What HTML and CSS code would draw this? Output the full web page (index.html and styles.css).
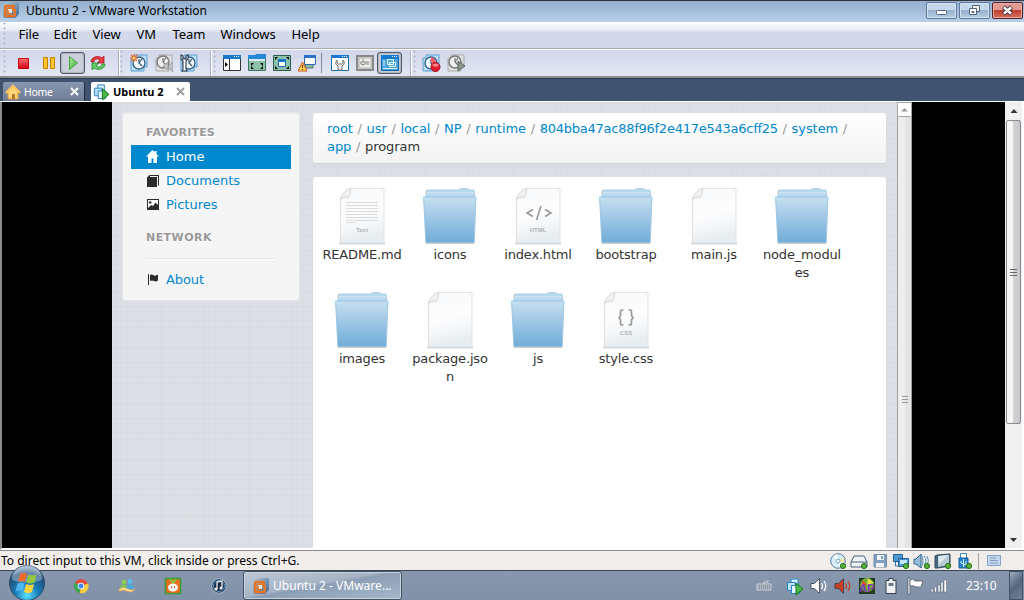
FILE: index.html
```html
<!DOCTYPE html>
<html lang="en">
<head>
<meta charset="utf-8">
<title>Ubuntu 2 - VMware Workstation</title>
<link rel="stylesheet" href="styles.css">
</head>
<body>
<svg class="defs" width="0" height="0">
  <defs>
    <linearGradient id="gFolder" x1="0" y1="0" x2="0" y2="1"><stop offset="0" stop-color="#c6dff0"/><stop offset="1" stop-color="#6facd8"/></linearGradient>
    <linearGradient id="gPaper" x1="0" y1="0" x2="0.2" y2="1"><stop offset="0" stop-color="#f6f8f9"/><stop offset=".5" stop-color="#fdfdfe"/><stop offset=".75" stop-color="#f4f7f9"/><stop offset="1" stop-color="#e6ecf0"/></linearGradient>
    <linearGradient id="gRed" x1="0" y1="0" x2="0" y2="1"><stop offset="0" stop-color="#ff7070"/><stop offset="1" stop-color="#d80010"/></linearGradient>
    <linearGradient id="gGreen" x1="0" y1="0" x2="1" y2="1"><stop offset="0" stop-color="#b8f0a0"/><stop offset="1" stop-color="#2fa82f"/></linearGradient>
    <linearGradient id="gSteel" x1="0" y1="0" x2="1" y2="1"><stop offset="0" stop-color="#b4cbdc"/><stop offset="1" stop-color="#3e6690"/></linearGradient>
    <radialGradient id="gOrb" cx=".5" cy=".85" r=".8"><stop offset="0" stop-color="#5fe0ff"/><stop offset=".4" stop-color="#1880ba"/><stop offset=".8" stop-color="#204f7c"/><stop offset="1" stop-color="#86a6c2"/></radialGradient>
  </defs>
  <symbol id="folder" viewBox="0 0 64 64">
    <path d="M8 14V7.500q0-1.500 1.500-1.500H41l1-1.500h8l1 1.500h4q1.500 0 1.500 1.500V14z" fill="#b9d9ee" stroke="#9cc6e2" stroke-width=".8"/>
    <path d="M8.500 9h48" stroke="#d5e8f5"/>
    <path d="M5.500 13h52.500l-1.800 45.500H7.800z" fill="url(#gFolder)" stroke="#93c0df" stroke-width=".8"/>
    <path d="M8 59.300h48" stroke="#8b9297" stroke-width="1" opacity=".6"/>
  </symbol>
  <symbol id="file" viewBox="0 0 64 64">
    <path d="M9 59.500h46" stroke="#c4c4c4" stroke-width="1.500"/>
    <path d="M10.500 14L20 4.500h34V59H10.500z" fill="url(#gPaper)" stroke="#e2e4e6"/>
    <path d="M10.500 15.500c1-4 5-10 9.800-11 1 3-.3 7-2 9-2-.7-6 0-7.800 2z" fill="#f1f1f1" stroke="#cfd0d0" stroke-width=".9"/>
  </symbol>
  <symbol id="shots" viewBox="0 0 18 18">
    <path d="M1 4h3V1h13v12h-3v4H1z" fill="#b8def7" stroke="#5aa0d4"/><circle cx="9" cy="9" r="6" fill="#f4fbff" stroke="#39658c" stroke-width="1.400"/><path d="M9 5v4l3 3M9 9l3-4" fill="none" stroke="#385777" stroke-width="1.200"/>
  </symbol>
  <symbol id="shotsgrey" viewBox="0 0 18 18">
    <path d="M1 4h3V1h13v12h-3v4H1z" fill="#dedfe0" stroke="#aaa"/><circle cx="8" cy="8" r="6" fill="#eee" stroke="#777" stroke-width="1.400"/><path d="M8 4v4l3 3M8 8l3-4" fill="none" stroke="#777" stroke-width="1.200"/>
  </symbol>
  <symbol id="vmlogo" viewBox="0 0 18 18">
    <path d="M1 5q0-1 1-1.500L4 1.500Q4.500 1 6 1h9.500Q17 1 17 2.500V12q0 1-1 2l-2 2q-.5 1-2 1H3q-2 0-2-2z" fill="url(#gSteel)"/>
    <path d="M6.500 9.500V8h5V5H4.200Q3.200 5 3.200 6v8q0 1 1 1h7.500q1 0 1-1V8" fill="none" stroke="#e87424" stroke-width="2.600"/><path d="M6 8h4v4H6z" fill="#dce9f3"/><path d="M6 9v3.500h3" fill="none" stroke="#e87424" stroke-width="1.500"/>
  </symbol>
  <symbol id="vmrun" viewBox="0 0 18 18">
    <path d="M5 2h7v8H5z" fill="#d8efff" stroke="#2784c9"/><path d="M1.500 5.500h8v8h-8z" fill="#bce0fa" stroke="#2784c9"/><path d="M5.500 8.500h8v8h-8z" fill="#e5f4ff" stroke="#2784c9"/><path d="M10 6v12l7-6z" fill="#49b647" stroke="#17751c"/>
  </symbol>
  <symbol id="speaker" viewBox="0 0 18 18">
    <path d="M1 6.500h3.500L9.500 1.500v15L4.500 11.500H1z" fill="currentColor" stroke="#333b45" stroke-width=".8"/><path d="M11.500 6q2 3 0 6M14 4q3.500 5 0 10" fill="none" stroke="currentColor" stroke-width="1.300"/>
  </symbol>
</svg>

<div class="window">
  <header class="titlebar">
    <svg class="logo" width="18" height="18"><use href="#vmlogo"/></svg>
    <h1 class="title">Ubuntu 2 - VMware Workstation</h1>
    <div class="controls">
      <button class="ctl"><svg width="29" height="15"><rect x="9.500" y="7.500" width="10" height="4" rx="1" fill="#fff" stroke="#53647a"/></svg></button>
      <button class="ctl"><svg width="29" height="15"><path d="M12.500 2.500h7v6h-7z" fill="#eee" stroke="#53647a"/><path d="M9.500 5.500h7v6h-7z" fill="#fff" stroke="#53647a"/><path d="M12 8.500h2v1h-2z" fill="none" stroke="#53647a"/></svg></button>
      <button class="ctl close"><svg width="29" height="15"><path d="M10.500 4l8 7M18.500 4l-8 7" stroke="#4f3946" stroke-width="4.500"/><path d="M11 4.400l7 6.200M18 4.400l-7 6.200" stroke="#fff" stroke-width="2.600"/></svg></button>
    </div>
  </header>

  <nav class="menubar"><i class="grip"></i>
    <span>File</span><span>Edit</span><span>View</span><span>VM</span><span>Team</span><span>Windows</span><span>Help</span>
  </nav>

  <div class="toolbar">
    <div class="tools first"><i class="grip"></i>
      <span class="tool"><svg width="18" height="18"><path d="M4.500 4.500h10v10h-10z" fill="url(#gRed)" stroke="#c80010"/></svg></span>
      <span class="tool"><svg width="18" height="18"><path d="M4.500 3.500h4v11h-4zM11.500 3.500h4v11h-4z" fill="#ffc428" stroke="#c98200"/></svg></span>
      <span class="tool pressed"><svg width="18" height="18"><path d="M5.500 2.500v13l8-6.500z" fill="url(#gGreen)" stroke="#3aa43a"/></svg></span>
      <span class="tool"><svg width="20" height="18"><path d="M3 8C3 3 10 1 14 4l2-2v7H9l3-3C9 4 6 5 6 8z" fill="#ee3b41" stroke="#a8182a" stroke-width=".8"/><path d="M17 10c0 5-7 7-11 4l-2 2V9h7l-3 3c3 2 6 1 6-2z" fill="#60cf64" stroke="#238635" stroke-width=".8"/></svg></span>
    </div>
    <div class="tools second"><i class="grip"></i>
      <span class="tool"><svg width="18" height="18"><use href="#shots"/><path d="M4 0v8M0 4h8M1 1l6 6M7 1L1 7" stroke="#f0602b" stroke-width="1.200"/><circle cx="4" cy="4" r="1.500" fill="#ffe36b"/></svg></span>
      <span class="tool"><svg width="18" height="18"><use href="#shotsgrey"/><path d="M13 8v8l-5-4zM18 8v10l-5-5z" fill="#c6c6c6" stroke="#888" stroke-width=".7"/></svg></span>
      <span class="tool"><svg width="18" height="18"><use href="#shots"/><path d="M1 1v4l2 2v8l-1 2h5l-1-2V7l2-2V1L6 2v3H3V2z" fill="#fff" stroke="#263849" stroke-width="1.100"/></svg></span>
    </div>
    <div class="tools third"><i class="grip"></i>
      <span class="tool"><svg width="18" height="18"><path d="M.5 1.500h17v15H.5z" fill="#fff" stroke="#333"/><path d="M0 1h18v4H0z" fill="#1979c9"/><path d="M11 2.500h1m1 0h1m1 0h1" stroke="#fff"/><path d="M6.500 5v12" stroke="#333"/><path d="M2 8v5l3-2.500z"/></svg></span>
      <span class="tool"><svg width="18" height="18"><path d="M.5 1.500h17v15H.5z" fill="#8bc2a9" stroke="#38745e"/><path d="M0 4V1h7l1-1h10v5H0z" fill="#2688d8"/><path d="M1 5h16v2H1z" fill="#d9edf7"/><path d="M3 9h3l-3 3zM15 9h-3l3 3zM3 15h3l-3-3zM15 15h-3l3-3z"/></svg></span>
      <span class="tool"><svg width="18" height="18"><path d="M.5 1.500h17v15H.5z" fill="#8bc2a9" stroke="#285d4b"/><path d="M5.500 5.500h7v7h-7z" fill="#fff" stroke="#1768c0"/><path d="M5 5h8v3H5z" fill="#1979c9"/><path d="M2 3h3L2 6zM16 3h-3l3 3zM2 15h3l-3-3zM16 15h-3l3-3z"/></svg></span>
      <span class="tool"><svg width="18" height="18"><path d="M8 7h7v7H7z" fill="#8db8a2" stroke="#4c7765"/><path d="M6.500 1.500h11v9h-11z" fill="#fff" stroke="#2d67b6"/><path d="M6 1h12v3H6z" fill="#2b70cb"/><path d="M4.500 8L9 17H0z" fill="#ffe24d" stroke="#d05322"/><path d="M4.500 11v3m0 1v1" stroke="#a42200" stroke-width="1.300"/></svg></span>
      <i class="rule"></i>
      <span class="tool"><svg width="18" height="18"><path d="M.5 1.500h17v15H.5z" fill="#fff" stroke="#1670b6"/><path d="M0 1h18v3H0z" fill="#1979d2"/><path d="M11 2.500h1m1 0h1m1 0h1" stroke="#fff"/><path d="M6 6q-3 4 1 6v4h4v-4q4-2 1-6v3l-1.500 1h-3L6 9z" fill="#eee" stroke="#737373"/></svg></span>
      <span class="tool"><svg width="18" height="18"><path d="M1 2h16v14H1z" fill="#ddd" stroke="#888" stroke-width="2"/><path d="M3 4h12v10H3z" fill="#f2f2ec" stroke="#aaa"/><path d="M5 7v3q2 2 4 0V7M7 5v4m3-1h3m-3 2h3" fill="none" stroke="#777"/></svg></span>
      <span class="tool pressed"><svg width="18" height="18"><path d="M.5 1.500h17v15H.5z" fill="#4ba3dc" stroke="#1264a8"/><path d="M0 1h18v4H0z" fill="#167bd0"/><path d="M11 2.500h1m1 0h1m1 0h1" stroke="#fff"/><path d="M6.500 5.500h6v5h-6zM8.500 8.500h6v4h-6z" fill="#4fa7df" stroke="#e4f6ff"/><path d="M2 7h2M2 9h2M2 11h2M2 14.500h14" stroke="#d3eeff"/></svg></span>
    </div>
    <div class="tools fourth"><i class="grip"></i>
      <span class="tool"><svg width="19" height="18"><use href="#shots" width="18" height="18"/><path d="M9 9V3q5 1 5 6z" fill="#f3606c"/><circle cx="13.500" cy="13" r="4.500" fill="#e21c2b" stroke="#a20d1a"/><ellipse cx="13.500" cy="11" rx="3" ry="1.500" fill="#f5858c"/></svg></span>
      <span class="tool"><svg width="19" height="18"><use href="#shotsgrey" width="18" height="18"/><path d="M11 7v10l7-5z" fill="#8c988c" stroke="#596559"/></svg></span>
    </div>
  </div>

  <div class="tabs">
    <div class="tab home"><svg width="16" height="16"><path d="M3 8v7h10V8L8 3z" fill="#fcd77b" stroke="#dd9836"/><path d="M1 9l7-7 7 7" fill="none" stroke="#ffc65c" stroke-width="2.400"/><path d="M7 10h3v5H7z" fill="#b8782c"/></svg><span>Home</span><svg class="x" width="9" height="9"><path d="M1 1l7 7M8 1L1 8" stroke="#fff" stroke-width="2"/></svg></div>
    <div class="tab active"><svg width="17" height="17"><use href="#vmrun"/></svg><b>Ubuntu 2</b><svg class="x" width="9" height="9"><path d="M1 1l7 7M8 1L1 8" stroke="#a0a0a0" stroke-width="2"/></svg></div>
  </div>

  <main class="console">
    <div class="void left"></div>
    <div class="guest">
      <aside class="sidebar">
        <h2>Favorites</h2>
        <a class="on"><svg width="14" height="14"><path d="M6.500 0L0 6.500h2V13h3.500V8.500h2V13H11V6.500h2L10.500 4V1h-2v1z" fill="#fff"/></svg>Home</a>
        <a><svg width="14" height="14"><path d="M1 3.500L3.500 1H13v10.500h-1V2H4v1h7v10H1z" fill="#2b2b2b"/></svg>Documents</a>
        <a><svg width="14" height="14"><path d="M1 1h12v11H1z" fill="#2b2b2b"/><path d="M2 2h10v5L9.500 4.500 7 8 5 7l-3 3z" fill="#fff"/><circle cx="4.200" cy="4.500" r="1.300" fill="#2b2b2b"/></svg>Pictures</a>
        <h2 class="net">Network</h2>
        <hr>
        <a><svg width="14" height="14"><path d="M2.500 1v11" stroke="#2b2b2b"/><path d="M4 2Q6 1 8 2.500q2 .5 4-1v6Q10 9 8 8 6 7 4 8z" fill="#2b2b2b"/></svg>About</a>
      </aside>
      <section class="browser">
        <ul class="crumbs"><li><a>root</a></li> <li><a>usr</a></li> <li><a>local</a></li> <li><a>NP</a></li> <li><a>runtime</a></li> <li><a class="hash">804bba47ac88f96f2e417e543a6cff25</a></li> <li><a>system</a></li> <li><a>app</a></li> <li>program</li></ul>
        <div class="files">
          <figure><svg width="64" height="64"><use href="#file"/><path d="M16 18.500h32M16 21.500h32M16 24.500h32M16 27.500h32M16 30.500h32M16 33.500h32M16 36.500h32M16 38.500h10" stroke="#d9dbdc" stroke-width="1"/><text x="32" y="47.500" class="kind">Text</text></svg><figcaption>README.md</figcaption></figure>
          <figure><svg width="64" height="64"><use href="#folder"/></svg><figcaption>icons</figcaption></figure>
          <figure><svg width="64" height="64"><use href="#file"/><path d="M27 25.500l-6 3.500 6 3.500M39 25.500l6 3.500-6 3.500M35 22l-4.500 14" fill="none" stroke="#999" stroke-width="1.600"/><text x="32" y="47.500" class="kind">HTML</text></svg><figcaption>index.html</figcaption></figure>
          <figure><svg width="64" height="64"><use href="#folder"/></svg><figcaption>bootstrap</figcaption></figure>
          <figure><svg width="64" height="64"><use href="#file"/></svg><figcaption>main.js</figcaption></figure>
          <figure><svg width="64" height="64"><use href="#folder"/></svg><figcaption>node_modules</figcaption></figure>
          <figure><svg width="64" height="64"><use href="#folder"/></svg><figcaption>images</figcaption></figure>
          <figure><svg width="64" height="64"><use href="#file"/></svg><figcaption>package.json</figcaption></figure>
          <figure><svg width="64" height="64"><use href="#folder"/></svg><figcaption>js</figcaption></figure>
          <figure><svg width="64" height="64"><use href="#file"/><path d="M29.500 22h-1.500q-1.500 0-1.500 2v3.500L25 29.700l1.500 2V35q0 2 1.500 2h1.500M34.500 22H36q1.500 0 1.500 2v3.500l1.500 2.200-1.500 2V35q0 2-1.500 2h-1.500" fill="none" stroke="#999" stroke-width="1.700"/><text x="32" y="47" class="kind">CSS</text></svg><figcaption>style.css</figcaption></figure>
        </div>
      </section>
    </div>
    <div class="gscroll">
      <svg class="cap" width="15" height="16"><path d="M.5 14.500v-13l1-1h12l1 1v13z" fill="#fff" stroke="#a5a5a5"/><path d="M4 9.500h7L7.500 6z" fill="#999"/></svg>
      <svg class="ticks" width="6" height="8"><path d="M0 .5h6M0 3.500h6M0 6.500h6" stroke="#999"/></svg>
    </div>
    <div class="void right"></div>
    <div class="scroll">
      <svg width="17" height="17"><path d="M5.500 11h7L9 7z" fill="#333"/></svg>
      <div class="thumb"><svg width="8" height="9"><path d="M0 1.500h7M0 4.500h7M0 7.500h7" stroke="#666"/></svg></div>
      <svg class="down" width="17" height="17"><path d="M5 7h7l-3.500 4z" fill="#333"/></svg>
    </div>
  </main>

  <footer class="status">
    <span class="hint">To direct input to this VM, click inside or press Ctrl+G.</span>
    <div class="devices">
      <svg width="18" height="18"><circle cx="9" cy="9" r="7.300" fill="#d7edfa" stroke="#567b9c"/><path d="M9 9L4 4l4-2zM9 9l5 5-3 2z" fill="#fff"/><path d="M9 9l6-3v4z" fill="#f5e391"/><circle cx="9" cy="9" r="2" fill="#fff" stroke="#7ca5c1"/><circle class="led" cx="14" cy="14" r="2.600"/></svg>
      <svg width="18" height="18"><path d="M1 10l3-6h10l3 6v5H1z" fill="#eef3f7" stroke="#4a6076"/><path d="M1 10h16" stroke="#4a6076"/><circle class="led" cx="14" cy="14" r="2.600"/></svg>
      <svg width="18" height="18"><path d="M3 2.500h12.500v12.500H3z" fill="#829fbe" stroke="#718eac"/><path d="M6 3h7v5H6zM5 11h8v4H5z" fill="#f1f4f9"/><path d="M10 4h2v3h-2z" fill="#829fbe"/></svg>
      <svg width="18" height="18"><path d="M1.500 2.500h9v7h-9zM6.500 6.500h10v8h-10z" fill="#4f9bd6" stroke="#245f96"/><path d="M8 8h7v4H8z" fill="#bee8ff"/><path d="M3.500 10v4h3" fill="none" stroke="#357aaf"/><circle class="led" cx="14" cy="14" r="2.600"/></svg>
      <svg width="18" height="18"><path d="M1 7h2l5-5v14l-5-4H1z" fill="#93bddb" stroke="#34678e"/><path d="M8 2q4 7 0 14M11 4q4 5 0 9M14 4q3 5 0 9" fill="none" stroke="#5a91b7"/><circle class="led" cx="14" cy="14" r="2.600"/></svg>
      <svg width="18" height="18"><path d="M1 4l2-1 13-1v12L4 16H1z" fill="#47687c" stroke="#344f5f"/><path d="M4 4l11-1v10L4 15z" fill="#b8ccd8"/><path d="M4 4l11-1L5 12z" fill="#dce9f0"/><circle class="led" cx="14" cy="14" r="2.600"/></svg>
      <svg width="18" height="18"><path d="M5.500 1.500h6v5h-6z" fill="#fff" stroke="#4184b5"/><path d="M4 6h9v10H4z" fill="#2382c7" stroke="#155f9b"/><path d="M8.500 15V7M6 9v2l5 2V9" fill="none" stroke="#d9f2ff"/><circle class="led" cx="14" cy="14" r="2.600"/></svg>
      <i></i>
      <svg class="last" width="18" height="18"><path d="M2.500 3.500h13v10h-13z" fill="#c5d7ed" stroke="#86a3c7"/><path d="M5 6h6M5 8.500h8M5 11h8" stroke="#7d9cc1"/></svg>
    </div>
  </footer>
</div>

<div class="taskbar">
  <div class="orb"><svg width="38" height="38"><circle cx="19" cy="19" r="17.500" fill="url(#gOrb)" stroke="#304b64"/><path d="M4 16a15 15 0 0 1 30 0q-15 5-30 0z" fill="#fff" opacity=".32"/><path d="M12 10q4-2 7 0l-2 8q-4-2-7 0z" fill="#f06a2d"/><path d="M20.500 10.500q4 2 8 0l-2 8q-4 2-8 0z" fill="#94c83d"/><path d="M9.500 19.500q4-2 7 0l-2 8q-4-2-7 0z" fill="#4cb9f0"/><path d="M18 20q4 2 8 0l-2 8q-4 2-8 0z" fill="#ffd33f"/></svg></div>
  <div class="pins">
    <svg width="18" height="18"><circle cx="9" cy="9" r="7" fill="#e5483c"/><path d="M9 9L3 5.500A7 7 0 0 0 8 16z" fill="#34a853"/><path d="M9 9l7-2.500A7 7 0 0 1 8 16z" fill="#fbcf3b"/><circle cx="9" cy="9" r="3.300" fill="#fff"/><circle cx="9" cy="9" r="2.500" fill="#4285f4"/></svg>
    <svg width="18" height="18"><circle cx="6" cy="5" r="2.200" fill="#8ed24c"/><path d="M2 12q0-5 4-4.500 4 0 4 4.500z" fill="#7cc653"/><circle cx="12" cy="4.500" r="2.500" fill="#5db7ed"/><path d="M8 12q0-5 4-4.500 4 0 4 4.500z" fill="#4ba9e2"/><path d="M1 12q5-3 9 0 4 2 7 0-2 4-7 2.500-4-2-9-.5z" fill="#fbe09a" stroke="#dfa04a" stroke-width=".7"/></svg>
    <svg width="18" height="18"><path d="M1.500 1.500h15v15h-15z" fill="#ed6b20" stroke="#379d36" stroke-width="1.500"/><path d="M9 6L6 2M9 6l3-4" stroke="#7ccc40" stroke-width="2"/><ellipse cx="9" cy="10.500" rx="5" ry="4" fill="#fff"/><path d="M7.500 9v2m3-2v2" stroke="#d75d25"/></svg>
    <svg width="18" height="18"><circle cx="9" cy="9" r="7.200" fill="#1b2d45" stroke="#a7bed2"/><circle cx="9" cy="9" r="5.500" fill="none" stroke="#5795c8"/><path d="M7 12V5l5-1v7" fill="none" stroke="#eee" stroke-width="1.300"/><circle cx="6" cy="12" r="1.500" fill="#eee"/><circle cx="11" cy="11" r="1.500" fill="#eee"/></svg>
  </div>
  <div class="task"><svg width="18" height="18"><use href="#vmlogo"/></svg><span>Ubuntu 2 - VMware...</span></div>
  <div class="tray">
    <svg class="keyb" width="18" height="18"><path d="M2 7h14v6H2z" fill="#8795a5" stroke="#d0d4d9"/><path d="M3 9h12M3 11h12" stroke="#d9dde1" stroke-dasharray="1 1"/><path d="M9 7V5h4V3" fill="none" stroke="#d0d4d9"/></svg>
    <svg width="18" height="18"><use href="#vmrun"/></svg>
    <svg class="white" width="18" height="18"><use href="#speaker"/></svg>
    <svg class="red" width="18" height="18"><use href="#speaker"/></svg>
    <svg width="18" height="18"><path d="M1 1h16v16H1z" fill="#25391d"/><circle cx="9" cy="8" r="7" fill="#71b338"/><path d="M9 8l1-7 6 5z" fill="#e4e044"/><path d="M5 3l4 5-6 1z" fill="#dd4c35"/><text x="9" y="15" class="ap">AP</text></svg>
    <svg width="18" height="18"><path d="M7 1.500h4v2h3v13H4v-13h3z" fill="#eef1f4" stroke="#333d47"/><path d="M6.500 6h5v3h-5z" fill="#697989"/></svg>
    <svg width="18" height="18"><path d="M2 1h2v16H2z" fill="#fff" stroke="#444e59" stroke-width=".7"/><path d="M4 3q3-2 5 1h8l-2 6h-5Q7 8 4 9z" fill="#fff" stroke="#444e59" stroke-width=".7"/></svg>
    <svg width="18" height="18"><path d="M1 12h2v3H1zM4.500 10h2v5h-2zM8 8h2v7H8zM11 5h2v10h-2zM14 3h2.500v12H14z" fill="#fff" stroke="#56636f" stroke-width=".5"/></svg>
  </div>
  <time>23:10</time>
  <div class="peek"></div>
</div>
</body>
</html>
```

FILE: styles.css
```css
* { box-sizing: border-box; }
body { margin: 0; width: 1024px; height: 600px; overflow: hidden; font: 12px "Noto Sans", "Open Sans", sans-serif; color: #000; display: flex; flex-direction: column; }
svg { display: block; flex: none; }
.defs { position: absolute; }
.window { height: 570px; display: flex; flex-direction: column; flex: none; }

.titlebar { height: 22px; border-top: 1px solid #35363c; background: linear-gradient(#93afcf, #b7cfe8); display: flex; flex: none; padding-left: 2px; }
.title { margin: 0 0 0 6px; font-size: 12px; font-weight: 400; line-height: 20px; letter-spacing: .03px; white-space: nowrap; }
.controls { margin-left: auto; display: flex; gap: 2px; padding: 1px 1px 0 0; }
.ctl { width: 31px; height: 17px; padding: 0; display: flex; align-items: center; justify-content: center; border: 1px solid #5d7898; border-radius: 2px; background: linear-gradient(#c5d8eb 45%, #96b2cf 50%, #b6cee5); box-shadow: inset 0 0 0 1px #d6e5f3; }
.ctl.close { border-color: #56202b; background: linear-gradient(#e19a91 45%, #bd3d30 50%, #d6725b); box-shadow: inset 0 0 0 1px #e9aaa0; }

.grip { width: 3px; flex: none; background: radial-gradient(circle at 1.500px 1.500px, #b4b8c6 .8px, transparent 1.300px) 0 0/3px 5px; }
.menubar { height: 27px; flex: none; display: grid; grid-template-columns: 3px 35px 39px 44px 36px 48px 71px 40px; padding-left: 3px; font-size: 13px; line-height: 25px; letter-spacing: -.05px; background: linear-gradient(#fff, #e3e8f3 9px, #d3d8eb 10px); border-bottom: 1px solid #aaabaf; }
.menubar span { padding-left: 12.500px; white-space: nowrap; overflow: visible; }

.toolbar { height: 29px; flex: none; display: flex; border-top: 1px solid #fff; border-bottom: 2px solid #8b8b90; background: linear-gradient(#d1d6e9, #e3e7f5); }
.tools { display: flex; align-items: center; border-right: 1px solid #aaaeba; box-shadow: 1px 0 #fff; }
.tools .grip { align-self: stretch; margin-right: 3px; }
.tool { width: 25px; height: 22px; margin-bottom: 1px; display: flex; align-items: center; justify-content: center; flex: none; }
.pressed { border: 1px solid #515967; border-radius: 3px; background: #cbd0dc; box-shadow: inset 0 0 2px #777; }
.first { width: 119px; padding-left: 3px; }
.first .grip { margin-right: 4px; }
.second { width: 92px; padding-left: 1px; }
.third { width: 200px; padding-left: 2px; }
.rule { height: 20px; width: 1px; margin: 0 5px 0 2px; background: #85899a; }
.fourth { padding-left: 2px; border: 0; box-shadow: none; }

.tabs { height: 24px; flex: none; background: #405371; border-top: 1px solid #30394b; border-bottom: 1px solid #fff; padding: 3px 0 0 3px; display: flex; gap: 6px; }
.tab { height: 19px; display: flex; align-items: center; font-size: 11px; border-radius: 2px 2px 0 0; }
.tab.home { width: 82px; padding-left: 2px; color: #fff; background: linear-gradient(#8996af, #6c7c97); border-right: 1px solid #202c40; }
.tab.home span { margin-left: 3px; width: 44px; font-size: 10.500px; letter-spacing: -.3px; }
.tab.active { width: 99px; padding-left: 2px; background: #fff; }
.tab.active b { margin-left: 3px; width: 61px; white-space: nowrap; }
.tab .x { margin-left: 2px; }

.console { height: 448px; flex: none; display: flex; border-left: 2px solid #8c8c90; border-bottom: 2px solid #fff; }
.void { background: #000; flex: none; }
.left { width: 110px; }
.right { width: 93px; }
.guest { width: 785px; flex: none; display: flex; align-items: flex-start; gap: 13px; padding: 10px 11px 0 10px; background: repeating-linear-gradient(0deg, #ffffff18 0 1px, #0000 1px 3px, #a9b5c10c 3px 4px, #0000 4px 7px), repeating-linear-gradient(90deg, #ffffff14 0 1px, #0000 1px 4px, #a9b5c10c 4px 5px, #0000 5px 11px), #dadee3; font: 13px/18px "DejaVu Sans", sans-serif; color: #333; }
.sidebar { width: 178px; height: 189px; flex: none; border: 1px solid #e6e7e9; border-radius: 4px; background: #f5f5f5; padding: 11px 8px 0; box-shadow: inset 0 1px 1px #0000000d; }
.sidebar h2 { margin: 0; padding: 0 15px; font-size: 11px; line-height: 18px; color: #999; text-transform: uppercase; text-shadow: 0 1px #fff; letter-spacing: .2px; }
.sidebar h2 + a { margin-top: 3px; }
.sidebar a { display: flex; align-items: center; height: 24px; padding-left: 15px; gap: 6px; color: #08c; }
.sidebar .on { color: #fff; background: #08c; }
.sidebar .net { margin-top: 12px; letter-spacing: .45px; }
.sidebar hr { margin: 11px 16px 8px 15px; border: 0; height: 2px; background: linear-gradient(#e5e5e5 50%, #fff 50%); }
.sidebar a:last-child { letter-spacing: -.1px; }
.browser { width: 573px; height: 436px; display: flex; flex-direction: column; gap: 14px; padding-top: 1px; }
.crumbs { margin: 0; height: 50px; flex: none; padding: 7px 14px; list-style: none; letter-spacing: -.06px; background: linear-gradient(#fff, #f3f3f3); border-radius: 3px; box-shadow: 0 1px #d2d6da; }
.crumbs li { display: inline; }
.crumbs li:not(:last-child)::after { content: "/"; color: #999; padding: 0 .6px 0 4.700px; }
.crumbs a { color: #08c; }
.crumbs .hash { letter-spacing: -.25px; }
.files { flex: 1; background: #fff; border-radius: 3px 3px 0 0; padding: 7px 5px; display: grid; grid-template-columns: repeat(6, 88px); grid-auto-rows: 104px; align-content: start; }
figure { margin: 0; padding: 0 4px; display: flex; flex-direction: column; align-items: center; }
figcaption { width: 80px; text-align: center; word-break: break-all; letter-spacing: -.17px; }
figure svg { margin-bottom: -2px; }
.kind { font: bold 6px "Liberation Sans", sans-serif; fill: #b1b5b7; text-anchor: middle; }

.gscroll { width: 15px; flex: none; border-left: 1px solid #a0a0a0; border-right: 1px solid #a0a0a0; background: linear-gradient(90deg, #eee 55%, #e4e4e4 55%); display: flex; flex-direction: column; align-items: center; }
.ticks { margin-top: 278px; }
.scroll { width: 17px; flex: none; background: #f0f0f0; display: flex; flex-direction: column; margin-right: 2px; }
.thumb { width: 15px; height: 304px; margin: 1px auto 0; border: 1px solid #8b8b8f; border-radius: 2px; background: linear-gradient(90deg, #f5f5f5 45%, #d2d3d7 50%, #c7c8cc); display: flex; align-items: center; justify-content: center; }
.down { margin-top: auto; }

.status { height: 20px; flex: none; border-top: 1px solid #8d8d91; background: #f0edeb; display: flex; align-items: center; padding-left: 1px; }
.hint { font-size: 12px; line-height: 18px; letter-spacing: 0; white-space: nowrap; }
.devices { margin-left: auto; display: flex; align-items: center; gap: 3px; padding-right: 21px; }
.devices i { width: 1px; height: 16px; background: #a5a5a5; margin: 0 3px 0 2px; }
.led { fill: #55b436; stroke: #246d1e; }

.taskbar { height: 30px; flex: none; background: linear-gradient(#8798ae, #8192a8); border-top: 1px solid #3b4654; display: flex; align-items: center; position: relative; }
.orb { position: absolute; left: 8px; top: -7px; }
.pins { display: flex; gap: 28px; margin-left: 72px; }
.task { margin-left: 15px; width: 159px; height: 29px; border: 1px solid #435265; border-radius: 3px; box-shadow: inset 0 0 0 1px #c8d1dc; background: linear-gradient(170deg, #bdc8d5, #a6b4c5 45%, #8d9fb5 50%, #a6b7ca); color: #fff; display: flex; align-items: center; gap: 3px; padding-left: 8px; white-space: nowrap; letter-spacing: .02px; }
.tray { display: flex; gap: 6px; margin-left: 353px; }
.tray .keyb { margin-right: 7px; }
.white { color: #fff; }
.red { color: #c93f26; }
.ap { font: bold 11px "Liberation Sans", sans-serif; fill: #8634b8; text-anchor: middle; }
time { margin-left: 18px; width: 43px; color: #fff; }
.peek { width: 14px; height: 29px; border: 1px solid #40536a; background: linear-gradient(135deg, #9cadbf, #56687e 50%, #71849b); }
```
